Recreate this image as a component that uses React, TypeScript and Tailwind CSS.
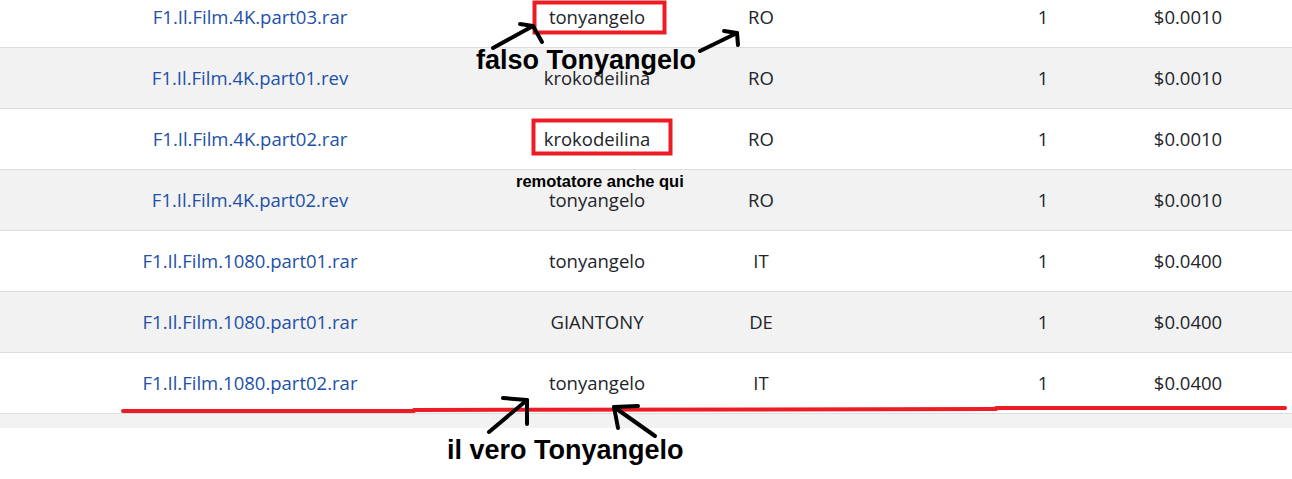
import React from 'react';

type Row = { file: string; user: string; country: string; qty: string; price: string };

const rows: Row[] = [
  { file: 'F1.Il.Film.4K.part03.rar', user: 'tonyangelo', country: 'RO', qty: '1', price: '$0.0010' },
  { file: 'F1.Il.Film.4K.part01.rev', user: 'krokodeilina', country: 'RO', qty: '1', price: '$0.0010' },
  { file: 'F1.Il.Film.4K.part02.rar', user: 'krokodeilina', country: 'RO', qty: '1', price: '$0.0010' },
  { file: 'F1.Il.Film.4K.part02.rev', user: 'tonyangelo', country: 'RO', qty: '1', price: '$0.0010' },
  { file: 'F1.Il.Film.1080.part01.rar', user: 'tonyangelo', country: 'IT', qty: '1', price: '$0.0400' },
  { file: 'F1.Il.Film.1080.part01.rar', user: 'GIANTONY', country: 'DE', qty: '1', price: '$0.0400' },
  { file: 'F1.Il.Film.1080.part02.rar', user: 'tonyangelo', country: 'IT', qty: '1', price: '$0.0400' },
];

function Annotations() {
  return (
    <svg className="absolute inset-0 pointer-events-none" width="1292" height="479" viewBox="0 0 1292 479">
      {/* red boxes */}
      <rect x="534.5" y="2.5" width="130" height="30" fill="none" stroke="#ed1c24" strokeWidth="4" />
      <rect x="533.5" y="120.5" width="137" height="33" fill="none" stroke="#ed1c24" strokeWidth="4" />
      {/* red underline */}
      <g stroke="#ed1c24" strokeWidth="4" strokeLinecap="round" fill="none">
        <path d="M123 411 L414 411" />
        <path d="M414 410 L996 409" />
        <path d="M996 408 L1285 408" />
      </g>
      {/* black arrows */}
      <g stroke="#000" strokeWidth="4" strokeLinecap="round" strokeLinejoin="round" fill="none">
        <path d="M493 48 L533 26" />
        <path d="M520 24 L533 26 L542 42" />
        <path d="M700 51 L737 33" />
        <path d="M724 31 L737 33 L738 45" />
        <path d="M489 432 L527 400" />
        <path d="M503 398 L527 400 L527 424" />
        <path d="M655 436 L614 407" />
        <path d="M638 406 L614 407 L618 428" />
      </g>
    </svg>
  );
}

export default function App() {
  return (
    <div className="relative w-[1292px] h-[479px] overflow-hidden bg-white" style={{ fontFamily: '"Open Sans", "Noto Sans", sans-serif' }}>
      <div className="-mt-[13px]">
        {rows.map((r, i) => (
          <div
            key={i}
            className={`grid grid-cols-[500px_194px_134px_130px_170px_120px_44px] h-[61px] items-center border-b border-[#dedede] text-[18.5px] text-[#212529] ${i % 2 === 1 ? 'bg-[#f2f2f2]' : 'bg-white'}`}
          >
            <div className="text-center text-[#2150a8]">{r.file}</div>
            <div className="text-center">{r.user}</div>
            <div className="text-center">{r.country}</div>
            <div />
            <div className="text-center">{r.qty}</div>
            <div className="text-center">{r.price}</div>
            <div />
          </div>
        ))}
        <div className="h-[14px] bg-[#f2f2f2]" />
      </div>

      <Annotations />

      <div className="absolute left-[476px] top-[47px] text-[27px] font-bold text-black leading-none" style={{ fontFamily: '"Liberation Sans", Arial, sans-serif' }}>
        falso Tonyangelo
      </div>
      <div className="absolute left-[516px] top-[173px] text-[16.5px] font-bold text-black leading-none" style={{ fontFamily: '"Liberation Sans", Arial, sans-serif' }}>
        remotatore anche qui
      </div>
      <div className="absolute left-[447px] top-[437px] text-[27px] font-bold text-black leading-none" style={{ fontFamily: '"Liberation Sans", Arial, sans-serif' }}>
        il vero Tonyangelo
      </div>
    </div>
  );
}
